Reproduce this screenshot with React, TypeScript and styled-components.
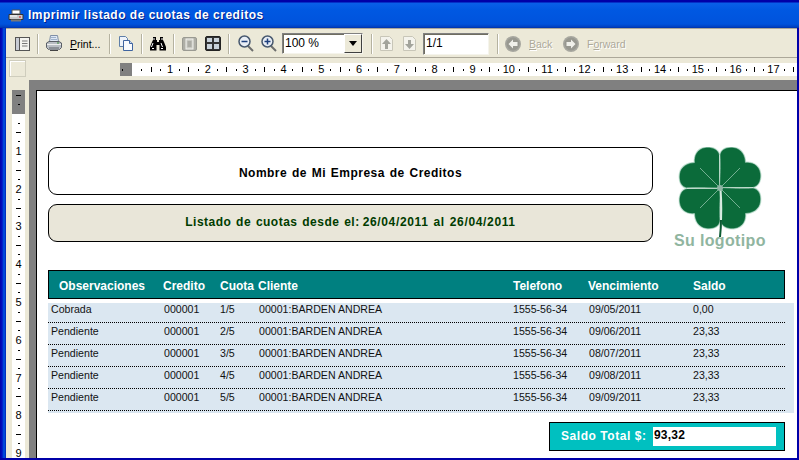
import React from "react";
import styled, { createGlobalStyle } from "styled-components";

const Global = createGlobalStyle`
  html, body { margin: 0; padding: 0; background: #0000a8; }
  * { box-sizing: border-box; }
`;

const Win = styled.div`
  width: 799px; height: 460px; overflow: hidden;
  display: flex; flex-direction: column;
  background: #0000a8;
  font-family: "Liberation Sans", Arial, sans-serif;
  -webkit-font-smoothing: none;
`;
const TitleBar = styled.div`
  height: 28px; flex: none; display: flex; align-items: center; gap: 4px; padding: 2px 0 0 8px;
  background: linear-gradient(#0000a8 0, #0000a8 2px, #0a5fe8 3px, #0058e2 10px, #0053dc 24px, #0040c0 27px, #0030a8 28px);
  color: #fff; font-weight: bold; font-size: 12px; letter-spacing: 0.5px;
  text-shadow: 1px 1px 0 #00208a;
`;
const Frame = styled.div`
  flex: 1; min-height: 0; display: flex; padding: 0 2px 2px 0;
`;
const LeftEdge = styled.div`
  width: 6px; flex: none;
  background: linear-gradient(90deg, #0000a8 0, #0010c0 2px, #0058e2 4px, #0040d0 5px, #0020b0 6px);
`;
const Main = styled.div`
  flex: 1; min-width: 0; display: flex; flex-direction: column; background: #ece9d8;
`;
const Toolbar = styled.div`
  height: 30px; flex: none; display: flex; align-items: center;
  border-top: 1px solid #aca899; border-bottom: 1px solid #aca899; padding-top: 1px;
`;
const Slot = styled.div<{ $x: number; $w: number }>`
  flex: none; width: ${p => p.$w}px; margin-left: ${p => p.$x}px; display: flex; align-items: center; justify-content: center;
  svg { display: block; }
`;
const Sep = styled.div<{ $x: number }>`
  flex: none; width: 2px; height: 20px; margin-left: ${p => p.$x}px;
  background: #b5b2a0; border-right: 1px solid #fff;
`;
const ToolLabel = styled.span<{ $x: number; $w: number; $off?: boolean }>`
  flex: none; margin-left: ${p => p.$x}px; width: ${p => p.$w}px; white-space: nowrap;
  font-size: 10.5px; color: ${p => (p.$off ? "#aca899" : "#000")};
  ${p => (p.$off ? "text-shadow: 1px 1px 0 #fff;" : "")}
  u { text-decoration: underline; }
`;
const Field = styled.div<{ $x: number; $w: number; $h: number }>`
  flex: none; margin-left: ${p => p.$x}px; width: ${p => p.$w}px; height: ${p => p.$h}px;
  background: #fff; border: 1px solid; border-color: #808080 #f5f4ec #f5f4ec #808080;
  box-shadow: inset 1px 1px 0 #6f6d60;
  display: flex; justify-content: space-between; align-items: flex-start;
  font-size: 12px; padding: 2px 0 0 2px; color: #000;
`;
const ComboBtn = styled.div`
  width: 18px; height: 19px; margin-top: -2px; background: #ece9d8;
  border: 1px solid; border-color: #fff #404040 #404040 #fff;
  display: flex; align-items: center; justify-content: center;
  &::after { content: ""; border: 4px solid transparent; border-top: 5px solid #000; border-bottom: 0; }
`;
const RulerRow = styled.div`
  height: 22px; flex: none; display: flex; align-items: flex-start;
`;
const Corner = styled.div`
  width: 17px; height: 17px; margin: 2px 0 0 3px; flex: none;
  border: 1px solid #cfcdbd; box-shadow: inset 1px 1px 0 #fff;
`;
const HRuler = styled.div`
  flex: 1; min-width: 0; height: 13px; margin: 5px 0 0 94px; display: flex; overflow: hidden; background: #fff;
`;
const HGray = styled.div`
  width: 12px; flex: none; background: #808080; margin-right: 5px; display: flex; align-items: center; padding-left: 2px;
  &::after { content: ""; width: 1px; height: 2px; background: #000; }
`;
const HCell = styled.div`
  flex: 0 0 37.8px; display: flex; height: 100%;
`;
const HTick = styled.div<{ $bar?: boolean }>`
  flex: 1; display: flex; align-items: center; justify-content: center;
  &::after { content: ""; width: 1px; height: ${p => (p.$bar ? 5 : 2)}px; background: #000; }
`;
const Num = styled.div`
  flex: 1; display: flex; align-items: center; justify-content: center; font-size: 11px; line-height: 1; color: #000; white-space: nowrap;
`;
const Viewer = styled.div`
  flex: 1; min-height: 0; display: flex;
`;
const VStrip = styled.div`
  width: 23px; flex: none; padding: 10px 4px 0 6px;
`;
const VRuler = styled.div`
  width: 13px; height: 100%; background: #fff; overflow: hidden;
`;
const VGray = styled.div`
  height: 24px; background: #808080; margin-bottom: 5px; display: flex; flex-direction: column; align-items: center; padding-top: 5px;
  &::before { content: ""; width: 5px; height: 1px; background: #000; margin-bottom: 8px; }
  &::after { content: ""; width: 2px; height: 1px; background: #000; }
`;
const VCell = styled.div`
  height: 37.8px; display: flex; flex-direction: column;
`;
const VTick = styled.div<{ $bar?: boolean }>`
  flex: 1; display: flex; align-items: center; justify-content: center;
  &::after { content: ""; height: 1px; width: ${p => (p.$bar ? 5 : 2)}px; background: #000; }
`;
const Pane = styled.div`
  flex: 1; min-width: 0; background: #808080; padding: 10px 0 0 7px; display: flex;
`;
const Page = styled.div`
  flex: 1; min-width: 0; background: #fff; border-top: 1px solid #000; border-left: 1px solid #000;
  padding: 56px 0 0 11px; overflow: hidden;
`;
const TopRow = styled.div`
  display: flex; height: 103px;
`;
const Boxes = styled.div`
  width: 605px; flex: none; display: flex; flex-direction: column; gap: 9px;
`;
const Box = styled.div<{ $tone?: boolean; $h: number }>`
  height: ${p => p.$h}px; border: 1px solid #000; border-radius: 9px;
  background: ${p => (p.$tone ? "#e9e6d9" : "#fff")};
  color: ${p => (p.$tone ? "#003c00" : "#000")};
  padding: ${p => (p.$tone ? "0 0 2px" : "4px 0 0")};
  display: flex; align-items: center; justify-content: center;
  font-size: 12px; font-weight: bold; letter-spacing: 0.48px; word-spacing: 1px; white-space: pre;
`;
const Dates = styled.span`
  margin-left: 3px; letter-spacing: 0.65px;
`;
const Logo = styled.div`
  position: relative; margin-left: 21px; width: 95px; height: 103px;
`;
const LogoText = styled.div`
  position: absolute; left: 0; top: 85px; font-size: 16px; font-weight: bold; color: #90b59f; white-space: nowrap; letter-spacing: 0.35px;
`;
const Cols = `104px 57px 38px 255px 75px 105px 1fr`;
const Head = styled.div`
  width: 737px; height: 29px; margin-top: 20px; border: 1px solid #000; background: #008080; color: #fff;
  display: grid; grid-template-columns: ${Cols}; align-items: center; padding: 3px 0 0 10px;
  font-size: 12px; font-weight: bold; white-space: nowrap;
`;
const Rows = styled.div`
  width: 746px; margin-top: 4px; background: #dbe7f1; padding-bottom: 2px;
`;
const Row = styled.div<{ $first?: boolean }>`
  width: 737px; height: ${p => (p.$first ? 20 : 22)}px; border-bottom: 1px dotted #000;
  display: grid; grid-template-columns: 113px 56px 39px 254px 76px 104px 1fr; align-items: end; padding: 0 0 6px 3px;
  font-size: 10.6px; line-height: 13px; color: #111; white-space: nowrap;
`;
const TotalWrap = styled.div`
  width: 737px; margin-top: 9px; display: flex; justify-content: flex-end;
`;
const Total = styled.div`
  width: 236px; height: 29px; border: 1px solid #000; background: #00c0c0; display: flex; align-items: center; padding: 0 8px 1px 11px;
  color: #fff; font-size: 12px; font-weight: bold; letter-spacing: 0.55px;
`;
const TotalValue = styled.div`
  margin-left: auto; width: 123px; height: 19px; margin-bottom: -1px; background: #fff; color: #000; padding-left: 1px; line-height: 16px; letter-spacing: 0.2px;
`;

const TitlePrinter = () => (
  <svg width="16" height="13" viewBox="0 0 16 13">
    <path d="M4 1h8v4H4z" fill="#fff" stroke="#555" />
    <path d="M1 5.500h14v5H1z" fill="#c9c9c9" stroke="#333" />
    <path d="M3 10.500h10v2H3z" fill="#777" />
    <path d="M2 7h7" stroke="#fff" />
    <path d="M11 8h2" stroke="#e01010" />
  </svg>
);
const PanelIcon = () => (
  <svg width="15" height="14" viewBox="0 0 15 14">
    <rect x=".5" y=".5" width="14" height="13" fill="#f4f4f0" stroke="#555" />
    <rect x="1" y="1" width="3" height="12" fill="#c8ccd4" />
    <path d="M4.500 1v12" stroke="#555" />
    <path d="M7 4h5.500M7 6.500h5.500M7 9h5.500" stroke="#777" />
  </svg>
);
const PrinterIcon = () => (
  <svg width="16" height="17" viewBox="0 0 16 17">
    <path d="M4.500.5h7l1 6h-9z" fill="#dfe8f4" stroke="#7f8fa6" />
    <path d="M5 2.500h5M5 4.500h6" stroke="#9fb2cc" />
    <path d="M.5 8 3 6.500h10L15.500 8v4.500l-2 2h-11l-2-2z" fill="#b9bec4" stroke="#5a5f66" />
    <path d="M1 9.500h14" stroke="#eee" />
    <path d="M3 12h10v3H3z" fill="#8b9096" />
    <path d="M11 8h2" stroke="#3a8a3a" />
    <path d="M4 15.500h8" stroke="#444" />
  </svg>
);
const CopyIcon = () => (
  <svg width="14" height="15" viewBox="0 0 14 15">
    <path d="M.5.500h6l2 2v8h-8z" fill="#eef3fa" stroke="#5f7fa8" />
    <path d="M4.500 4.500h6l3 3v7h-9z" fill="#f8fafd" stroke="#3f64a0" />
    <path d="M10.500 4.500v3h3" fill="#cfdcee" stroke="#3f64a0" />
  </svg>
);
const Binoculars = () => (
  <svg width="16" height="14" viewBox="0 0 16 14">
    <path d="M3 0h3v3h1v2h2V3h1V0h3v3l1 2 2 5v3.500H9.500V8h-3v5.500H0V10l2-5 1-2z" fill="#000" />
    <path d="M3 6 1.500 10M4 1v2M12 1v2M11 6l1.500 4" stroke="#fff" />
    <rect x="2" y="11" width="2" height="1" fill="#fff" />
    <rect x="11" y="11" width="2" height="1" fill="#fff" />
  </svg>
);
const SinglePage = () => (
  <svg width="15" height="14" viewBox="0 0 15 14">
    <rect x=".5" y=".5" width="14" height="13" rx="1.500" fill="#aeaea6" stroke="#9a9a92" />
    <rect x="4" y="2" width="7" height="10" fill="#c9c9c2" stroke="#f2f2ee" />
    <path d="M5.500 5h4M5.500 7h4M5.500 9h4" stroke="#8f8f88" />
  </svg>
);
const GridIcon = () => (
  <svg width="16" height="15" viewBox="0 0 16 15">
    <rect x=".5" y=".5" width="15" height="14" rx="1.500" fill="#333" stroke="#222" />
    <rect x="2" y="2" width="5" height="4" fill="#c9d2da" />
    <rect x="9" y="2" width="5" height="4" fill="#c9d2da" />
    <rect x="2" y="8" width="5" height="5" fill="#c9d2da" />
    <rect x="9" y="8" width="5" height="5" fill="#c9d2da" />
  </svg>
);
const ZoomIcon = ({ plus }: { plus?: boolean }) => (
  <svg width="16" height="17" viewBox="0 0 16 17">
    <path d="m10 11 5 5" stroke="#6d6d6d" strokeWidth="2" />
    <circle cx="6.500" cy="6.500" r="5.500" fill="#e9eef5" stroke="#47586e" strokeWidth="1.500" />
    <path d="M3.500 6.500h6" stroke="#1d3f7c" strokeWidth="1.500" />
    {plus && <path d="M6.500 3.500v6" stroke="#1d3f7c" strokeWidth="1.500" />}
  </svg>
);
const PageArrow = ({ down }: { down?: boolean }) => (
  <svg width="13" height="15" viewBox="0 0 13 15">
    <path d="M.5.500h9l3 3v11H.5z" fill="#f4f3ec" stroke="#c8c6b8" />
    {down ? (
      <path d="M5 4h3v4h3l-4.500 5L2 8h3z" fill="#a3a49c" />
    ) : (
      <path d="M5 13h3V8h3L6.500 3 2 8h3z" fill="#a3a49c" />
    )}
  </svg>
);
const NavCircle = ({ fwd }: { fwd?: boolean }) => (
  <svg width="16" height="16" viewBox="0 0 16 16">
    <circle cx="8" cy="8" r="8" fill="#a7a79f" />
    <circle cx="8" cy="8" r="6.500" fill="#989890" />
    <g transform={fwd ? "translate(16 0) scale(-1 1)" : undefined}>
      <path d="M3.500 8 8 3.500V6h4.500v4H8v2.500z" fill="#f0f0ea" />
    </g>
  </svg>
);
const leaf =
  "M0 0C-.5-12-.5-24-1-33C-2-39-9-41-15-40C-22-39-26-33-25-25C-33-25-39-21-40-14C-41-6-38-1-33-.5C-21-1-9-.5 0 0Z";
const quarters = [0, 90, 180, 270];
const Clover = () => (
  <svg width="95" height="92" viewBox="-46 -41 95 92" style={{ position: "absolute", left: 0, top: 0 }}>
    {quarters.map(r => (
      <path key={r} d={leaf} transform={`rotate(${r})`} fill="#c5e3d5" stroke="#c5e3d5" strokeWidth="2.500" strokeLinejoin="round" />
    ))}
    {quarters.map(r => (
      <g key={r} transform={`rotate(${r})`}>
        <path d={leaf} fill="#0b6b3a" stroke="#0b6b3a" strokeWidth=".5" />
        <path d="M-2-2-20-20" stroke="#8fc2a8" strokeWidth=".8" />
        <path d="M-.3-2V-33" stroke="#d5e9de" strokeWidth="1" />
      </g>
    ))}
    <path d="M.5 0Q2 22 .5 40" stroke="#d8ebe1" strokeWidth="2" fill="none" />
    <path d="M1 32Q1 40 0 49" stroke="#0b5a32" strokeWidth="2" fill="none" />
    <circle r="3" fill="#8fb5a5" />
  </svg>
);

const rows: [string, string, string, string][] = [
  ["Cobrada", "1/5", "09/05/2011", "0,00"],
  ["Pendiente", "2/5", "09/06/2011", "23,33"],
  ["Pendiente", "3/5", "08/07/2011", "23,33"],
  ["Pendiente", "4/5", "09/08/2011", "23,33"],
  ["Pendiente", "5/5", "09/09/2011", "23,33"],
];

export default function App() {
  return (
    <Win>
      <Global />
      <TitleBar>
        <TitlePrinter />
        <span>Imprimir listado de cuotas de creditos</span>
      </TitleBar>
      <Frame>
        <LeftEdge />
        <Main>
          <Toolbar>
            <Slot $x={9} $w={15}><PanelIcon /></Slot>
            <Sep $x={7} />
            <Slot $x={7} $w={16}><PrinterIcon /></Slot>
            <ToolLabel $x={8} $w={31}><u>P</u>rint...</ToolLabel>
            <Sep $x={8} />
            <Slot $x={8} $w={14}><CopyIcon /></Slot>
            <Sep $x={8} />
            <Slot $x={7} $w={16}><Binoculars /></Slot>
            <Sep $x={7} />
            <Slot $x={7} $w={15}><SinglePage /></Slot>
            <Slot $x={8} $w={16}><GridIcon /></Slot>
            <Sep $x={7} />
            <Slot $x={8} $w={16}><ZoomIcon /></Slot>
            <Slot $x={7} $w={16}><ZoomIcon plus /></Slot>
            <Field $x={5} $w={81} $h={21}>100 %<ComboBtn /></Field>
            <Sep $x={8} />
            <Slot $x={7} $w={13}><PageArrow /></Slot>
            <Slot $x={10} $w={13}><PageArrow down /></Slot>
            <Field $x={7} $w={66} $h={22}>1/1</Field>
            <Sep $x={8} />
            <Slot $x={6} $w={16}><NavCircle /></Slot>
            <ToolLabel $x={8} $w={25} $off><u>B</u>ack</ToolLabel>
            <Slot $x={9} $w={16}><NavCircle fwd /></Slot>
            <ToolLabel $x={8} $w={40} $off>F<u>o</u>rward</ToolLabel>
          </Toolbar>
          <RulerRow>
            <Corner />
            <HRuler>
              <HGray />
              {Array.from({ length: 18 }, (_, i) => (
                <HCell key={i}>
                  <HTick />
                  <HTick $bar />
                  <HTick />
                  <Num>{i < 17 ? i + 1 : ""}</Num>
                </HCell>
              ))}
            </HRuler>
          </RulerRow>
          <Viewer>
            <VStrip>
              <VRuler>
                <VGray />
                {Array.from({ length: 9 }, (_, i) => (
                  <VCell key={i}>
                    <VTick />
                    <VTick $bar />
                    <VTick />
                    <Num>{i + 1}</Num>
                  </VCell>
                ))}
              </VRuler>
            </VStrip>
            <Pane>
              <Page>
                <TopRow>
                  <Boxes>
                    <Box $h={48}>Nombre de Mi Empresa de Creditos</Box>
                    <Box $h={38} $tone>
                      Listado de cuotas desde el:<Dates>26/04/2011 al 26/04/2011</Dates>
                    </Box>
                  </Boxes>
                  <Logo>
                    <Clover />
                    <LogoText>Su logotipo</LogoText>
                  </Logo>
                </TopRow>
                <Head>
                  <span>Observaciones</span>
                  <span>Credito</span>
                  <span>Cuota</span>
                  <span>Cliente</span>
                  <span>Telefono</span>
                  <span>Vencimiento</span>
                  <span>Saldo</span>
                </Head>
                <Rows>
                  {rows.map((r, i) => (
                    <Row key={i} $first={i === 0}>
                      <span>{r[0]}</span>
                      <span>000001</span>
                      <span>{r[1]}</span>
                      <span>00001:BARDEN ANDREA</span>
                      <span>1555-56-34</span>
                      <span>{r[2]}</span>
                      <span>{r[3]}</span>
                    </Row>
                  ))}
                </Rows>
                <TotalWrap>
                  <Total>
                    Saldo Total $:
                    <TotalValue>93,32</TotalValue>
                  </Total>
                </TotalWrap>
              </Page>
            </Pane>
          </Viewer>
        </Main>
      </Frame>
    </Win>
  );
}
